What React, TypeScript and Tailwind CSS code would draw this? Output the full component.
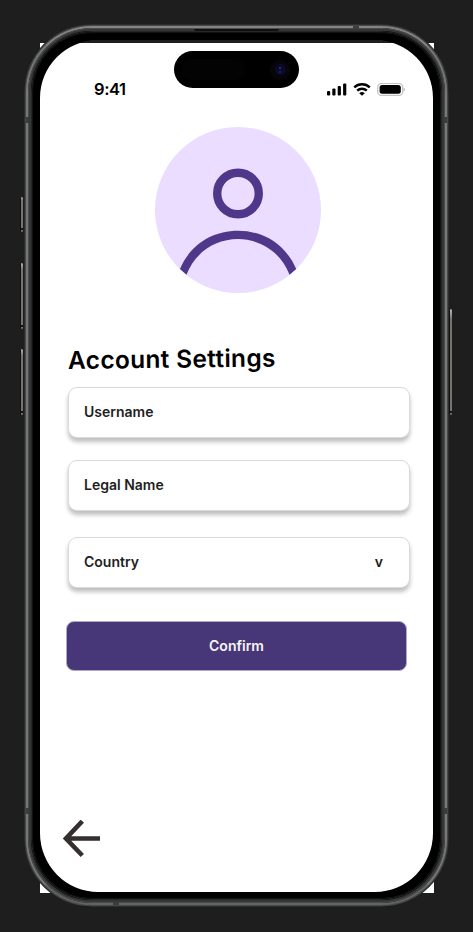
import React from "react";

const rings = [
  "inset-0 rounded-[68px] border-[16px] border-black border-b-[15px]",
  "inset-1 rounded-[70px] border-[12px] border-black border-b-[11px]",
  "inset-0 rounded-[68px] border-2 border-[#2c2e2e]",
  "inset-[1px] rounded-[67px] border-[3px] border-[#474848]",
  "inset-[2px] rounded-[66px] border-2 border-[#777777] border-t-[#858381] border-b-[#626262]",
  "inset-[4px] rounded-[64px] border-2 border-[#4c4d4e]",
  "inset-[5px] rounded-[63px] border-2 border-[#343536]",
  "inset-[7px] rounded-[61px] border border-[#262727]",
  "inset-[8px] rounded-[60px] border border-[#121212]",
];

function Key({ className }: { className: string }) {
  return (
    <div className={`flex w-[3px] flex-col justify-end rounded-sm border-l border-[#111] bg-gradient-to-b from-[#bbb] via-[#77736f] via-10% to-[#77736f] ${className}`}>
      <span className="mb-[2px] h-[2px] bg-[#151515]" />
    </div>
  );
}

function SideSeams() {
  return (
    <div className="flex flex-col justify-between py-[93px]">
      <i className="h-[6px] w-[3px] bg-[#3b3c3d]" />
      <i className="h-[6px] w-[3px] bg-[#3b3c3d]" />
    </div>
  );
}

function PhoneFrame() {
  return (
    <div className="pointer-events-none absolute inset-x-6 top-6 h-[883px]">
      <div className="absolute inset-0 -ml-1 -mr-[3px] flex justify-between">
        <div className="flex flex-col pt-[173px]">
          <Key className="h-[35px]" />
          <Key className="mt-[31px] h-[66px]" />
          <Key className="mt-5 h-[66px]" />
        </div>
        <div className="flex flex-col pt-[285px]">
          <Key className="h-[106px]" />
        </div>
      </div>
      {rings.map((r) => (
        <div key={r} className={`absolute ${r}`} />
      ))}
      <div className="absolute inset-0 flex justify-between px-[2px]">
        <SideSeams />
        <div className="flex grow flex-col px-[61px]">
          <i className="ml-[263px] mt-[2px] h-[3px] w-[6px] bg-[#3b3c3d]" />
          <i className="ml-[104px] h-[2px] w-[85px] rounded-b-sm bg-[#101010]" />
          <i className="mt-[9px] h-[3px] bg-[#1e1e1e]" />
          <i className="mb-[2px] ml-[23px] mt-auto h-[3px] w-[6px] bg-[#3b3c3d]" />
        </div>
        <SideSeams />
      </div>
    </div>
  );
}

function DynamicIsland() {
  return (
    <div className="absolute left-[174px] top-[51px] flex h-[37px] w-[125px] items-center justify-between rounded-full bg-black pl-[7px] pr-[9px]">
      <div className="h-[21px] w-[64px] rounded-full bg-[#030303]" />
      <div className="grid size-[20px] place-items-center rounded-full bg-[#08050a]">
        <div className="grid size-[11px] place-content-center gap-[2px] rounded-full bg-[#0a0b2b]">
          <i className="size-[2px] rounded-full bg-[#333578]" />
          <i className="size-[2px] rounded-full bg-[#292b70]" />
        </div>
      </div>
    </div>
  );
}

function StatusBar() {
  return (
    <header className="flex items-center justify-between pl-[54px] pr-[27px] pt-[37px]">
      <span className="text-[16.5px] font-semibold leading-[18px] tracking-[-0.4px]">9:41</span>
      <svg width="80" height="13" viewBox="0 0 80 13" fill="none">
        <g fill="#000">
          <rect x="0" y="8" width="3.2" height="4.5" rx="1" />
          <rect x="5.3" y="5.6" width="3.2" height="6.9" rx="1" />
          <rect x="10.7" y="3" width="3.2" height="9.5" rx="1" />
          <rect x="16.1" y="0.4" width="3.2" height="12.1" rx="1" />
        </g>
        <path d="M27.2 4.4a11.4 11.4 0 0 1 15.6 0M30.2 7.7a7 7 0 0 1 9.6 0" stroke="#000" strokeWidth="2.4" />
        <path d="M32.2 10.2a4.4 4.4 0 0 1 5.6 0L35 12.8z" fill="#000" />
        <rect x="50.7" y="0.4" width="25" height="12" rx="4" stroke="#c4c4c4" strokeWidth="1.3" />
        <rect x="52.6" y="2" width="21.2" height="8.8" rx="2.5" fill="#000" />
        <path d="M76.7 4.4v4c1.6-.6 1.6-3.4 0-4z" fill="#b0b0b0" />
      </svg>
    </header>
  );
}

function Avatar() {
  return (
    <svg className="shrink-0" width="166" height="166" viewBox="0 0 166 166" fill="none">
      <circle cx="83" cy="83" r="83" fill="#EADDFF" />
      <circle cx="83" cy="66.5" r="20.8" stroke="#4F378A" strokeWidth="8.4" />
      <path d="M25 142C35 118 57 103.7 83 103.7S131 118 141.2 142L134.5 147.8C126.5 126 106 112.1 83 112.1S39.5 126 31.5 147.8Z" fill="#4F378A" />
    </svg>
  );
}

function Field({ label, trailing }: { label: string; trailing?: string }) {
  return (
    <div className="flex h-[51px] items-center justify-between rounded-[9px] border border-[#dadada] bg-white pb-[1px] pl-[15px] pr-[26px] text-[14px] font-semibold leading-5 text-[#1e1e1e] shadow-[0_4px_4px_rgba(0,0,0,0.25)]">
      <span>{label}</span>
      {trailing && <span>{trailing}</span>}
    </div>
  );
}

export default function App() {
  return (
    <div className="relative flex h-[932px] w-[473px] flex-col overflow-hidden bg-[#1e1e1e] px-10 pt-[43px] font-['Inter',sans-serif] text-black">
      <main className="flex h-[850px] w-[394px] flex-col bg-white">
        <StatusBar />
        <div className="flex justify-center pl-[2px] pt-[29px]">
          <Avatar />
        </div>
        <form className="flex flex-col pl-[28px] pr-6 pt-[50px]">
          <h1 className="origin-left -rotate-[0.7deg] self-start whitespace-nowrap text-[24.5px] font-semibold leading-[34px] tracking-[0.3px]">Account Settings</h1>
          <div className="flex flex-col gap-[22px] pt-[10px]">
            <Field label="Username" />
            <Field label="Legal Name" />
            <div className="pt-1">
              <Field label="Country" trailing="v" />
            </div>
          </div>
          <button className="-ml-[2px] mr-[3px] mt-[33px] h-[50px] rounded-[8px] border border-[#afa7c3] bg-[#483778] pb-[1px] text-[14px] font-semibold text-[#f5f5f5]">Confirm</button>
        </form>
        <footer className="mt-auto flex pb-[35px] pl-[23px]">
          <svg width="38" height="38" viewBox="0 0 38 38" fill="none">
            <path d="M37 18.5H4M19.3 1.2L3 18.5L19.3 35.5" stroke="#362f2f" strokeWidth="4.6" />
          </svg>
        </footer>
      </main>
      <PhoneFrame />
      <DynamicIsland />
    </div>
  );
}
